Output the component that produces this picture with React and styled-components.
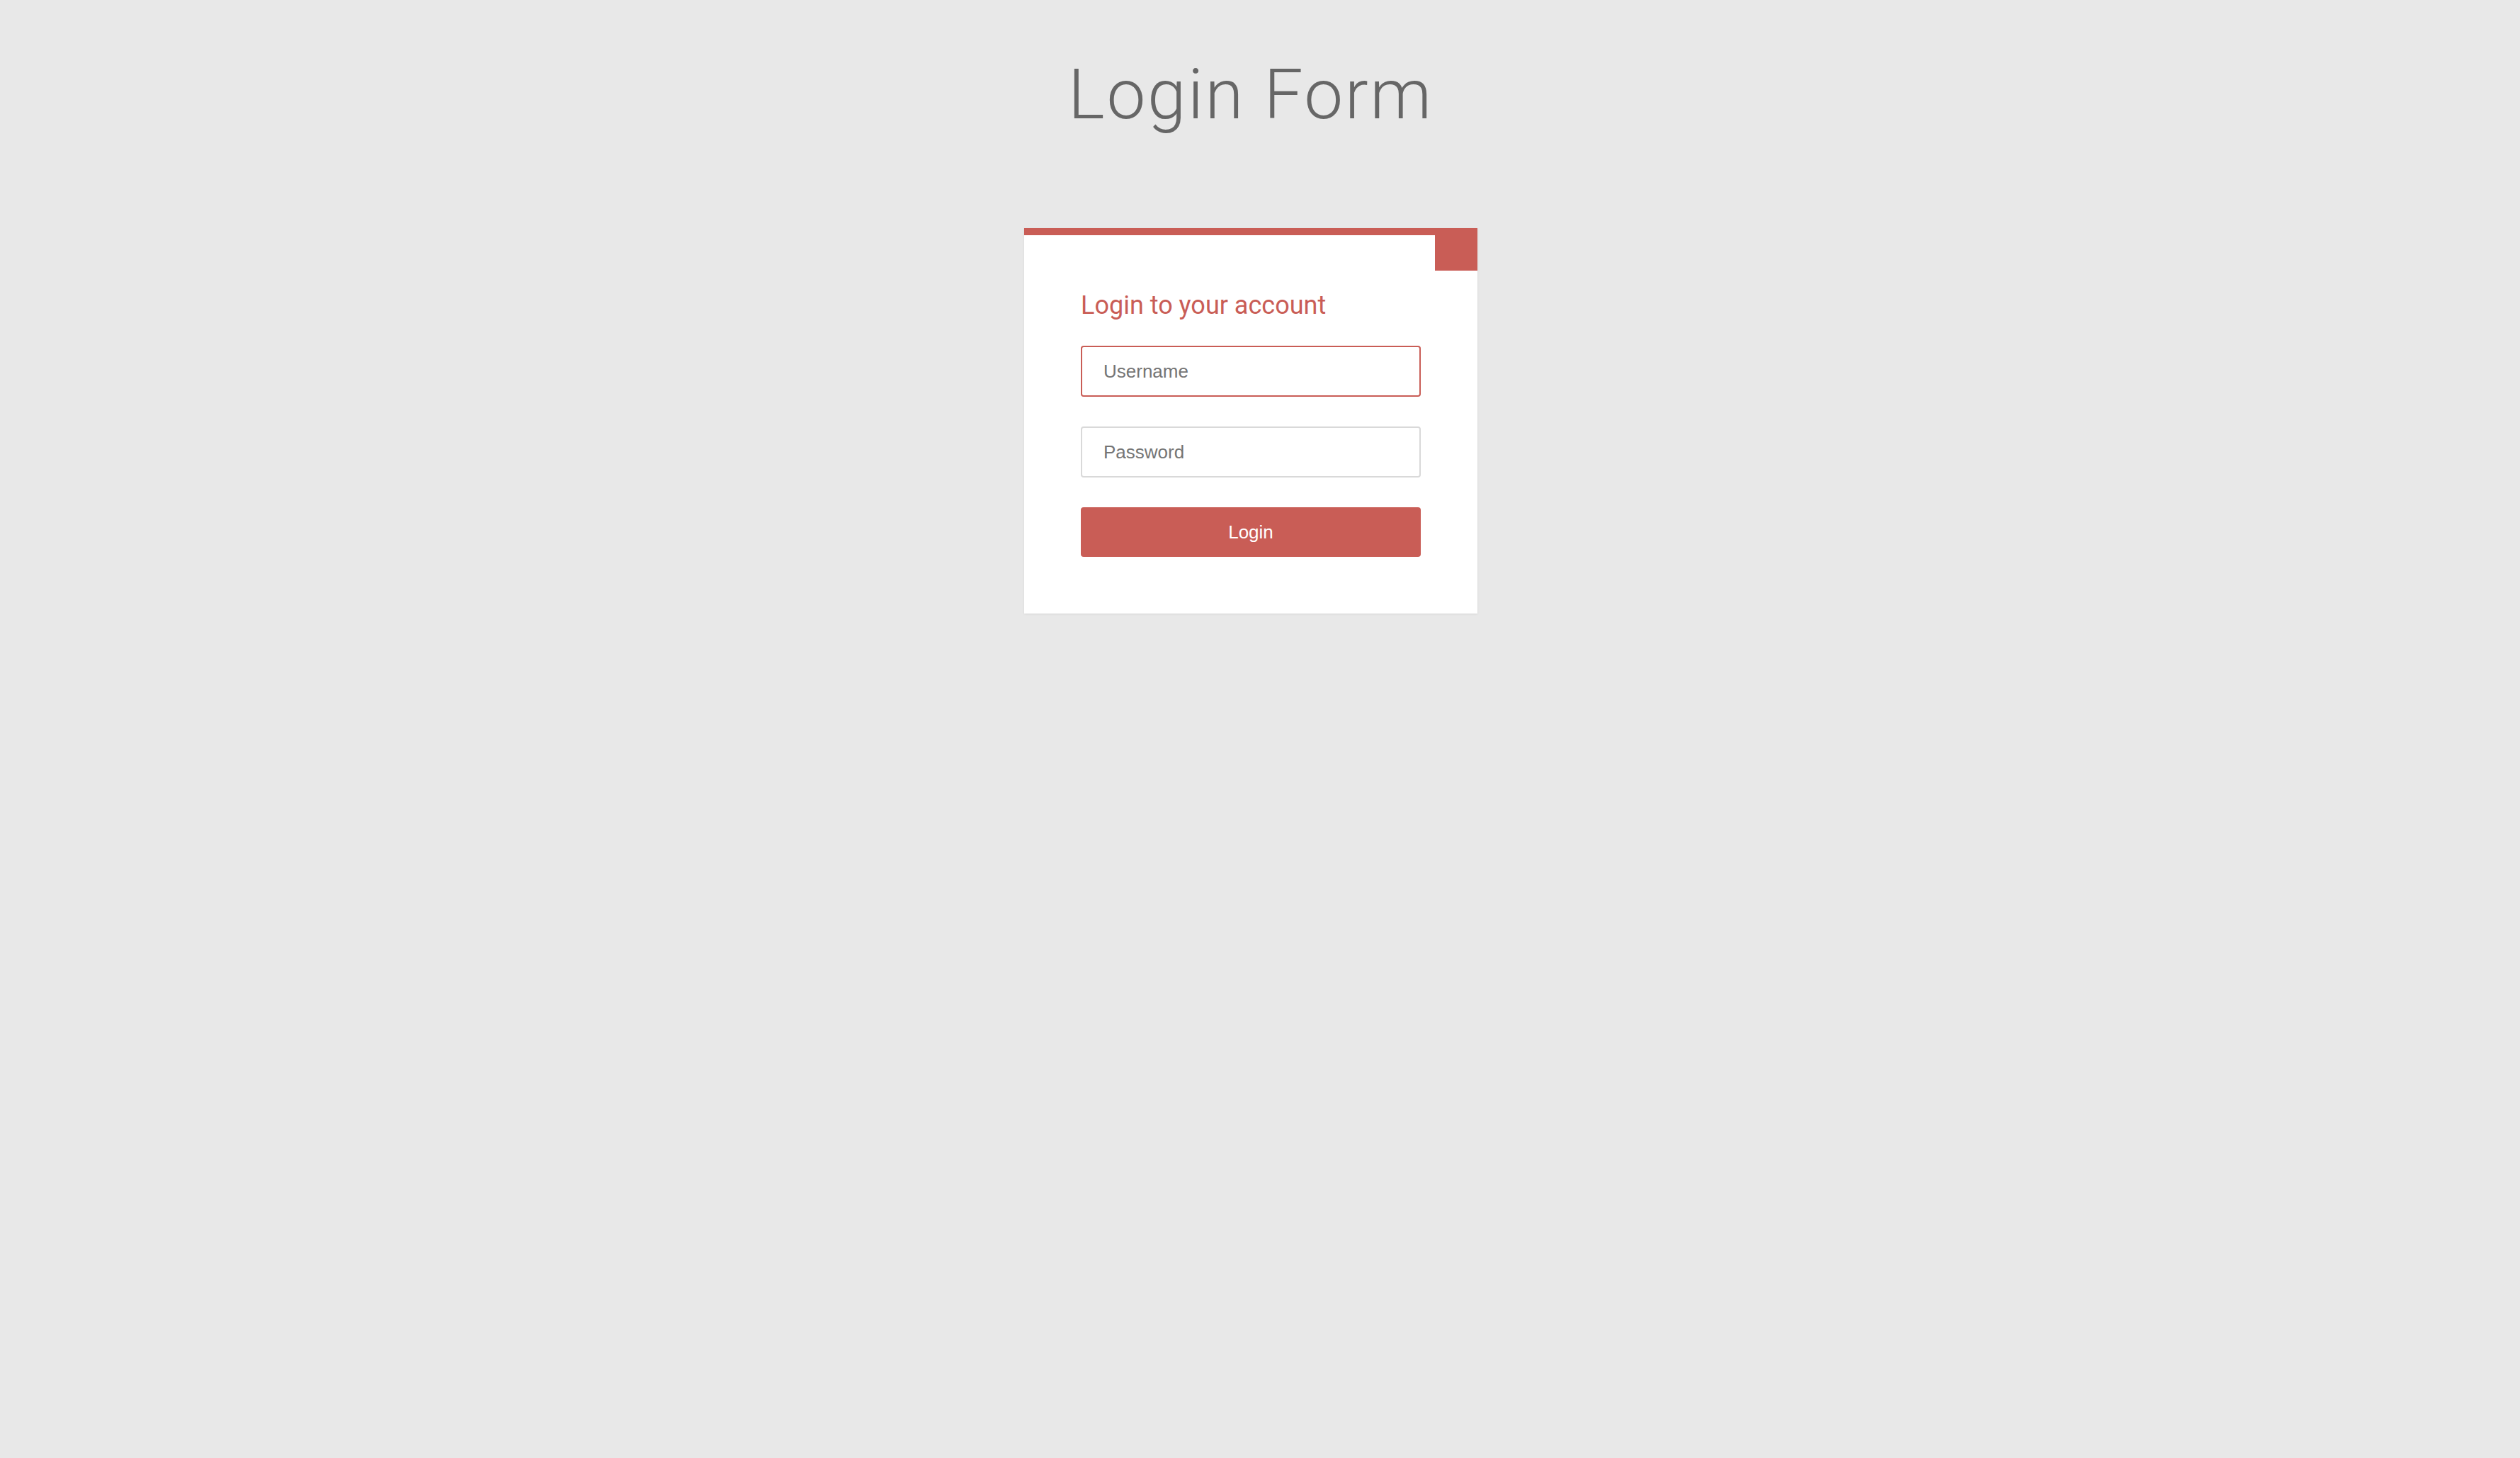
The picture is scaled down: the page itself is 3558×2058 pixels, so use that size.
import React from "react";
import styled, { createGlobalStyle } from "styled-components";

const RED = "#c95d56";

const GlobalStyle = createGlobalStyle`
  html, body {
    margin: 0;
    padding: 0;
    background: #e8e8e8;
  }
  body {
    font-family: "Liberation Sans", Arial, sans-serif;
  }
`;

const Page = styled.div`
  min-height: 2058px;
  width: 3532px;
  display: flex;
  flex-direction: column;
  align-items: center;
  padding-top: 76px;
  box-sizing: border-box;
`;

const Title = styled.h1`
  margin: 0 0 131px;
  font-family: Roboto, "Liberation Sans", sans-serif;
  font-weight: 300;
  font-size: 98px;
  line-height: 115px;
  color: #666666;
  letter-spacing: 2.6px;
`;

const Card = styled.form`
  position: relative;
  width: 640px;
  box-sizing: border-box;
  background: #ffffff;
  border-top: 10px solid ${RED};
  padding: 80px 80px 80px;
  box-shadow: 0 1px 3px rgba(0, 0, 0, 0.08);
  display: flex;
  flex-direction: column;

  &::before {
    content: "";
    position: absolute;
    top: -10px;
    right: 0;
    width: 60px;
    height: 60px;
    background: ${RED};
  }
`;

const Heading = styled.h2`
  margin: 0 0 38px;
  font-family: Roboto, "Liberation Sans", sans-serif;
  font-weight: 400;
  font-size: 36px;
  line-height: 38px;
  color: ${RED};
`;

const Input = styled.input`
  display: block;
  width: 100%;
  height: 72px;
  box-sizing: border-box;
  margin: 0 0 42px;
  padding: 0 30px;
  border: 2px solid ${(p) => (p.$active ? RED : "#d9d9d9")};
  border-radius: 4px;
  background: #ffffff;
  font-family: "Liberation Sans", Arial, sans-serif;
  font-size: 26px;
  color: #333333;
  caret-color: #222222;
  outline: none;

  &::placeholder {
    color: #757575;
  }
`;

const Button = styled.button`
  display: block;
  width: 100%;
  height: 70px;
  border: none;
  border-radius: 4px;
  background: ${RED};
  color: #ffffff;
  font-family: "Liberation Sans", Arial, sans-serif;
  font-size: 26px;
  cursor: pointer;
`;

export default function App() {
  return (
    <>
      <GlobalStyle />
      <Page>
        <Title>Login Form</Title>
        <Card onSubmit={(e) => e.preventDefault()}>
          <Heading>Login to your account</Heading>
          <Input $active type="text" placeholder="Username" autoFocus />
          <Input type="password" placeholder="Password" />
          <Button type="submit">Login</Button>
        </Card>
      </Page>
    </>
  );
}
